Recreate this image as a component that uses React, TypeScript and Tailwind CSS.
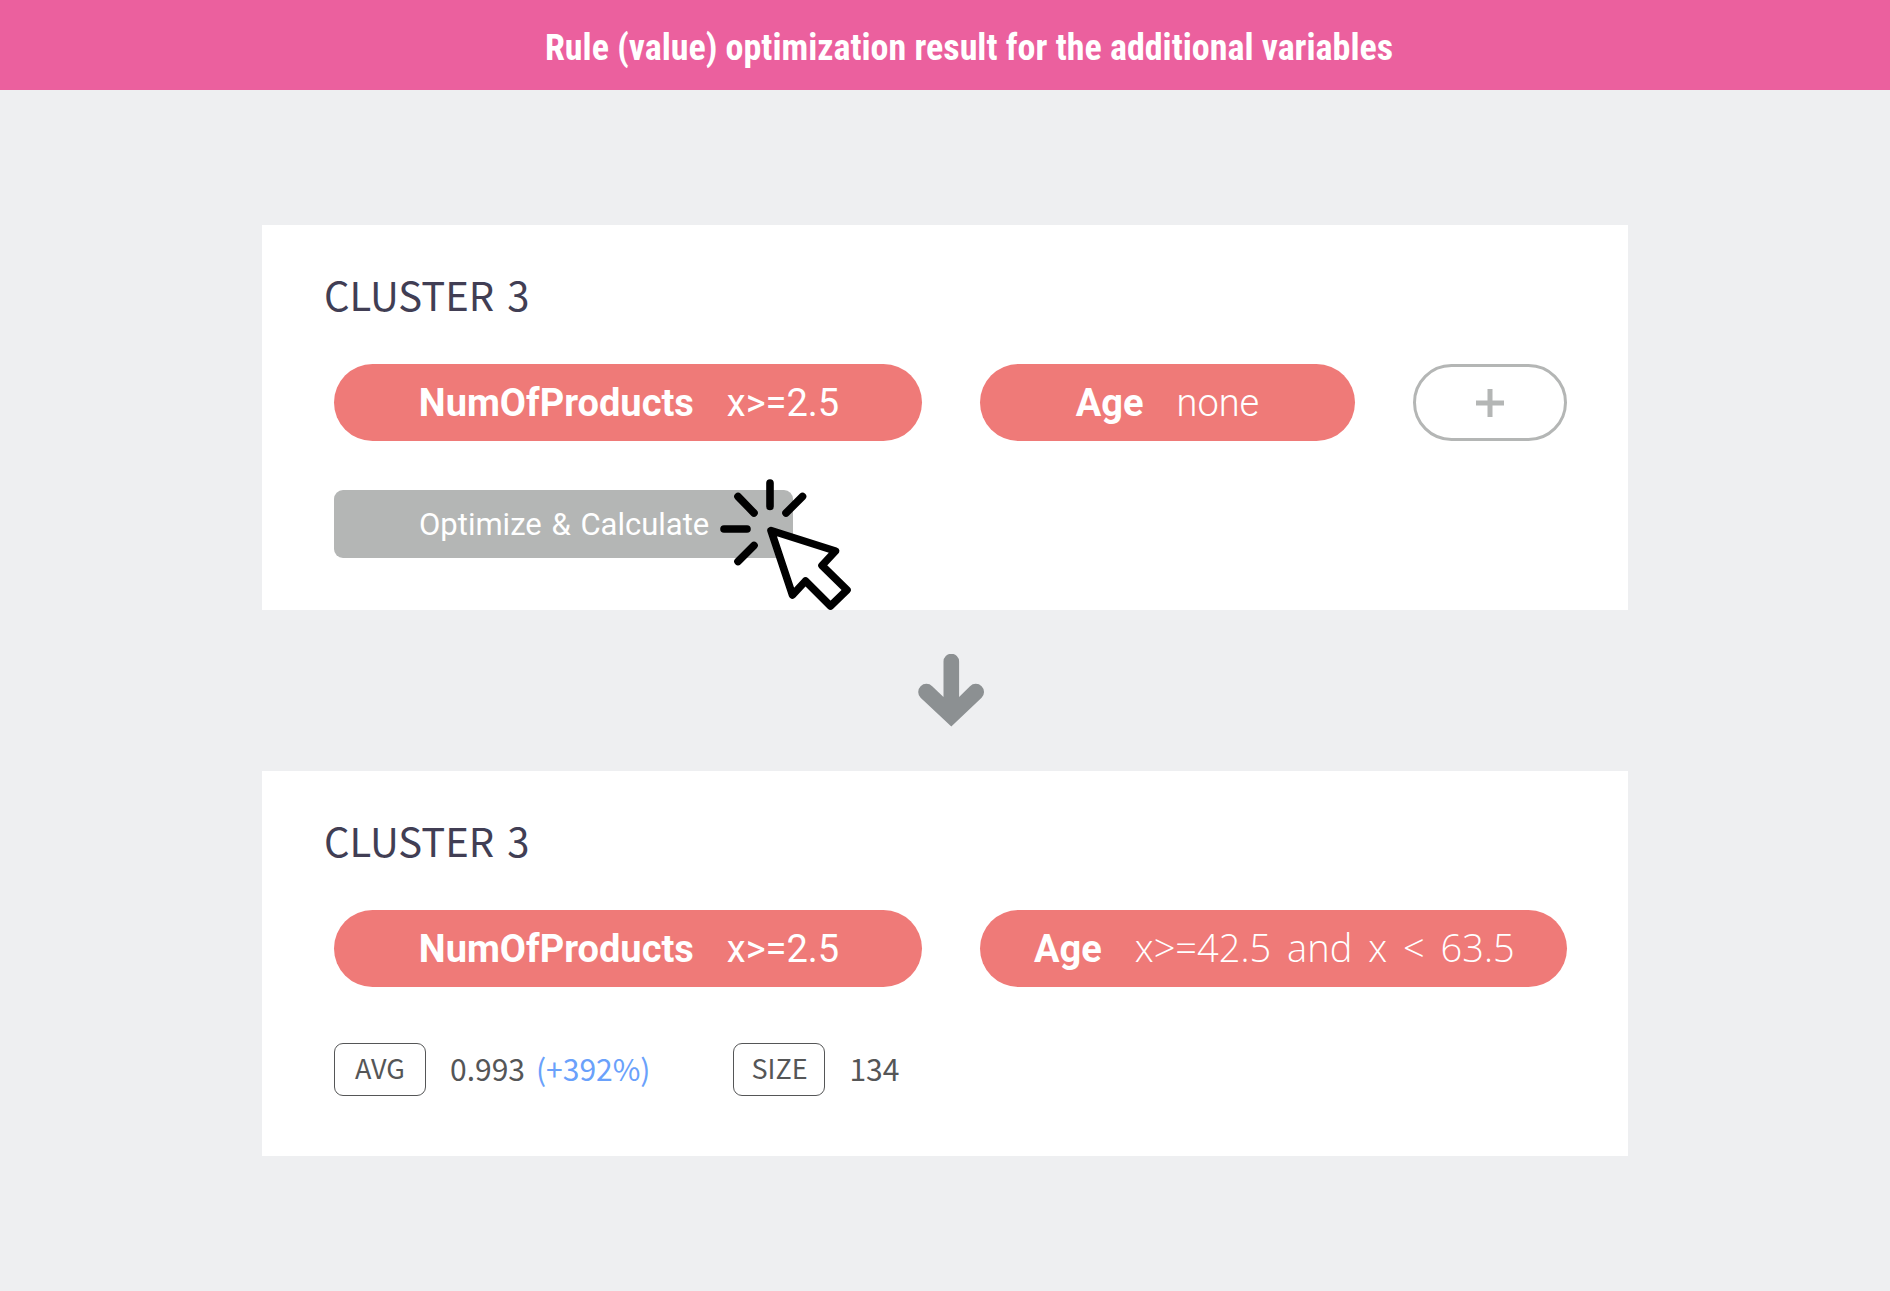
import React from "react";

function Title() {
  return (
    <h2 className="pl-0.5 font-['Noto_Sans_CJK_KR','Noto_Sans',sans-serif] text-[40px] leading-[52px] text-[#413e54]">
      CLUSTER <span className="ml-1">3</span>
    </h2>
  );
}

function Words({ text, className }: { text: string; className: string }) {
  return (
    <>
      {text.split(" ").map((word, i) => (
        <React.Fragment key={i}>
          {i > 0 && " "}
          <span className={i > 0 ? className : ""}>{word}</span>
        </React.Fragment>
      ))}
    </>
  );
}

function Pill({ name, rule, ruleClass = "font-normal", className }: { name: string; rule: string; ruleClass?: string; className: string }) {
  return (
    <div className={"flex h-[77px] items-center gap-[33px] whitespace-nowrap rounded-full bg-[#ef7a78] text-[38px] leading-none text-white " + className}>
      <strong className="font-bold">{name}</strong>
      <span className={ruleClass}><Words text={rule} className="ml-1.5" /></span>
    </div>
  );
}

function Stat({ label, children }: { label: string; children: React.ReactNode }) {
  return (
    <div className="flex items-center gap-6 font-['Noto_Sans_CJK_KR','Noto_Sans',sans-serif] text-[#555657]">
      <dt className="flex h-[53px] w-[92px] items-center justify-center rounded-[9px] border border-[#555657] pb-1 text-[27px] leading-none">{label}</dt>
      <dd className="flex gap-[11px] pb-1 text-[30px] leading-none">{children}</dd>
    </div>
  );
}

function ClickCursor() {
  return (
    <svg aria-hidden="true" viewBox="720 479 132 132" className="pointer-events-none absolute -right-[59px] -top-[11px] size-[132px]" fill="none" stroke="#000" strokeWidth="7.6" strokeLinecap="round" strokeLinejoin="round">
      <path d="M770 483V506.500M738 496.500L754 513M802.500 496.500L786 513M724 529H747M738 561.500L754 545.500" />
      <path fill="#fff" d="M771 530.500L835.500 551L822 565.500L847 590L830.500 606L805.500 581L792.500 595Z" />
    </svg>
  );
}

export default function App() {
  return (
    <div className="min-h-screen bg-[#eeeff1] font-[Roboto,sans-serif]">
      <header className="flex h-[90px] items-center justify-center bg-[#eb609e] pl-12 pt-1.5">
        <h1 className="whitespace-nowrap font-['Roboto_Condensed',Roboto,sans-serif] text-[36px] font-bold leading-none text-white">Rule (value) optimization result for the additional variables</h1>
      </header>
      <main className="flex flex-col items-center px-[262px] pt-[135px]">
        <section className="h-[385px] w-full bg-white px-[60px] pt-[43px]">
          <Title />
          <div className="mt-11 flex gap-[58px] pl-3">
            <Pill className="w-[588px] justify-center pl-0.5" name="NumOfProducts" rule="x>=2.5" />
            <Pill className="w-[375px] justify-center" name="Age" rule="none" ruleClass="font-light" />
            <button type="button" aria-label="Add variable" className="flex h-[77px] w-[154px] items-center justify-center rounded-full border-3 border-[#b4b6b5]">
              <svg aria-hidden="true" viewBox="0 0 28 28" className="size-7" stroke="#b4b6b5" strokeWidth="5"><path d="M14 0V28M0 14H28" /></svg>
            </button>
          </div>
          <div className="relative ml-3 mt-[49px] w-[459px]">
            <button type="button" className="h-[68px] w-full rounded-[9px] bg-[#b4b6b5] pl-[85px] text-left text-[31px] leading-none text-white">
              <Words text="Optimize & Calculate" className="ml-0.5" />
            </button>
            <ClickCursor />
          </div>
        </section>
        <svg role="img" aria-label="Result" viewBox="918 654 66 73" className="my-11 ml-3 h-[73px] w-[66px]" fill="#8c9092">
          <path d="M943.500 661.500a7.800 7.800 0 0 1 15.600 0V697L970 686.200a8.200 8.200 0 0 1 11.600 11.600L951.300 726.500L920.600 697.800a8.200 8.200 0 0 1 11.600-11.600L943.500 697Z" />
        </svg>
        <section className="h-[385px] w-full bg-white px-[60px] pt-[43px]">
          <Title />
          <div className="mt-11 flex gap-[58px] pl-3">
            <Pill className="w-[588px] justify-center pl-0.5" name="NumOfProducts" rule="x>=2.5" />
            <Pill className="w-[587px] pl-[54px]" name="Age" rule="x>=42.5 and x < 63.5" ruleClass="pb-1 font-['Open_Sans',sans-serif] font-light" />
          </div>
          <dl className="mt-14 flex gap-[83px] pl-3">
            <Stat label="AVG"><span>0.993</span><span className="text-[#6aa1fb]">(+392%)</span></Stat>
            <Stat label="SIZE">134</Stat>
          </dl>
        </section>
      </main>
    </div>
  );
}
